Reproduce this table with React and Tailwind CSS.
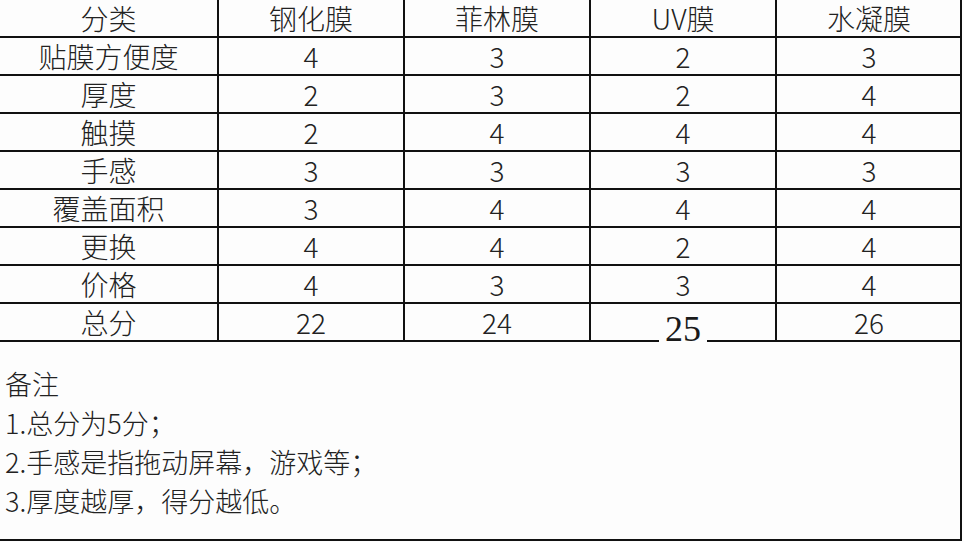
import React from 'react';

const cols = ['分类', '钢化膜', '菲林膜', 'UV膜', '水凝膜'];

const rows = [
    ['贴膜方便度', '4', '3', '2', '3'],
    ['厚度', '2', '3', '2', '4'],
    ['触摸', '2', '4', '4', '4'],
    ['手感', '3', '3', '3', '3'],
    ['覆盖面积', '3', '4', '4', '4'],
    ['更换', '4', '4', '2', '4'],
    ['价格', '4', '3', '3', '4'],
];

const notes = ['1.总分为5分；', '2.手感是指拖动屏幕，游戏等；', '3.厚度越厚，得分越低。'];

function Row({ cells }) {
    return (
        <div className="grid grid-cols-[217px_186px_186px_186px_186px] h-[38px] border-b-2 border-[#111]">
            {cells.map((c, i) => (
                <div
                    key={i}
                    className={`flex items-center justify-center ${i > 0 ? 'border-l-2 border-[#111]' : ''}`}
                >
                    {c}
                </div>
            ))}
        </div>
    );
}

export default function App() {
    return (
        <div
            className="w-[964px] h-[542px] bg-[#fdfdfd] text-[#222] overflow-hidden"
            style={{ fontFamily: '"Noto Sans CJK SC", "Noto Sans", sans-serif' }}
        >
            <div className="w-[962px] border-r-2 border-[#111] text-[28px] font-light leading-[34px]">
                <Row cells={cols} />
                {rows.map((r, i) => (
                    <Row key={i} cells={r} />
                ))}
                <div className="grid grid-cols-[217px_186px_186px_186px_186px] h-[38px] border-b-2 border-[#111]">
                    <div className="flex items-center justify-center">总分</div>
                    <div className="flex items-center justify-center border-l-2 border-[#111]">22</div>
                    <div className="flex items-center justify-center border-l-2 border-[#111]">24</div>
                    <div className="flex justify-center border-l-2 border-[#111]">
                        <span
                            className="relative z-10 top-[6px] h-[36px] bg-[#fdfdfd] px-[6px] text-[36px] leading-[38px] text-[#1a1a1a]"
                            style={{ fontFamily: '"Liberation Serif", serif' }}
                        >
                            25
                        </span>
                    </div>
                    <div className="flex items-center justify-center border-l-2 border-[#111]">26</div>
                </div>
                <div className="h-[199px] border-b-2 border-[#111] pt-[22px] pl-[5px] text-[27px] leading-[39px]">
                    <div>备注</div>
                    {notes.map((n) => (
                        <div key={n}>{n}</div>
                    ))}
                </div>
            </div>
        </div>
    );
}
